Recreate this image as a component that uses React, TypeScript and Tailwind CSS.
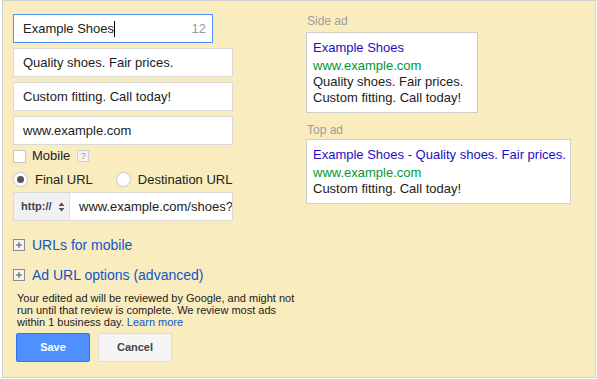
import React from 'react';

const font = { fontFamily: '"Liberation Sans", Arial, sans-serif' };

const Field: React.FC<{ value: string; wide?: boolean }> = ({ value }) => (
  <div className="h-[29px] w-[220px] mb-[5px] flex items-center bg-white border border-[#d9d9d9] pl-[9px] text-[13px] text-[#222]">
    {value}
  </div>
);

const PlusBox = () => (
  <svg width="12" height="12" viewBox="0 0 12 12" className="shrink-0">
    <rect x="0.5" y="0.5" width="11" height="11" fill="#f3f3f3" stroke="#8c8c8c" />
    <path d="M3 6h6M6 3v6" stroke="#555" strokeWidth="1" />
  </svg>
);

const Radio: React.FC<{ checked?: boolean }> = ({ checked }) => (
  <svg width="15" height="15" viewBox="0 0 15 15" className="shrink-0">
    <circle cx="7.5" cy="7.5" r="7" fill="#fff" stroke="#c6c6c6" />
    {checked && <circle cx="7.5" cy="7.5" r="3.5" fill="#555" />}
  </svg>
);

export default function App() {
  return (
    <div className="bg-white w-[597px] h-[379px]" style={font}>
      <div className="ml-[2px] w-[594px] h-[378px] border border-[#cfcfcf] bg-[#f9ecbe] flex pl-[10px] pt-[13px]">
        {/* form column */}
        <div className="w-[293px] shrink-0 flex flex-col">
          <div className="h-[29px] w-[200px] mb-[5px] flex items-center bg-white border border-[#4d90fe] pl-[9px] pr-[6px] text-[13px] text-[#222]">
            <span>Example Shoes</span>
            <span className="inline-block w-px h-[16px] bg-black" />
            <span className="ml-auto text-[#999]">12</span>
          </div>
          <Field value="Quality shoes. Fair prices." />
          <Field value="Custom fitting. Call today!" />
          <Field value="www.example.com" />

          <div className="flex items-center h-[14px] mt-[-1px] text-[13px] text-[#222]">
            <span className="w-[13px] h-[13px] bg-white border border-[#c6c6c6]" />
            <span className="ml-[6px]">Mobile</span>
            <span className="ml-[7px] w-[12px] h-[12px] border border-[#d0d0d0] bg-[#f3f3f3] flex items-center justify-center text-[9px] text-[#999] leading-none">?</span>
          </div>

          <div className="flex items-center h-[15px] mt-[9px] text-[13px] text-[#222]">
            <Radio checked />
            <span className="ml-[7px]">Final URL</span>
            <span className="ml-[23px]"><Radio /></span>
            <span className="ml-[7px]">Destination URL</span>
          </div>

          <div className="flex h-[29px] w-[220px] mt-[5px] border border-[#d9d9d9] bg-white overflow-hidden">
            <div className="w-[56px] shrink-0 bg-[#f1f1f1] border-r border-[#e0e0e0] flex items-center pl-[7px] text-[11px] font-bold text-[#444]">
              <span>http://</span>
              <svg width="7" height="10" viewBox="0 0 7 10" className="ml-[6px]">
                <path d="M3.5 0.5L6.5 4H0.5z M3.5 9.5L6.5 6H0.5z" fill="#555" />
              </svg>
            </div>
            <div className="flex items-center pl-[9px] text-[13px] text-[#222] whitespace-nowrap">www.example.com/shoes?</div>
          </div>

          <div className="flex items-center h-[16px] mt-[16px] text-[14px] text-[#1155cc]">
            <PlusBox />
            <span className="ml-[7px]">URLs for mobile</span>
          </div>
          <div className="flex items-center h-[16px] mt-[14px] text-[14px] text-[#1155cc]">
            <PlusBox />
            <span className="ml-[7px]">Ad URL options (advanced)</span>
          </div>

          <p className="ml-[4px] w-[285px] mt-[9px] text-[11px] leading-[12px] text-[#222]">
            Your edited ad will be reviewed by Google, and might not run until that review is complete. We review most ads within 1 business day. <span className="text-[#1155cc]">Learn more</span>
          </p>

          <div className="flex gap-[8px] ml-[3px] mt-[5px]">
            <button className="w-[74px] h-[29px] bg-[#4d90fe] border border-[#3079ed] rounded-[2px] text-white text-[11px] font-bold">Save</button>
            <button className="w-[74px] h-[29px] bg-[#f5f5f5] border border-[#dcdcdc] rounded-[2px] text-[#444] text-[11px] font-bold">Cancel</button>
          </div>
        </div>

        {/* preview column */}
        <div className="flex flex-col">
          <div className="pl-[1px] text-[12px] leading-[14px] text-[#9e9e9e]">Side ad</div>
          <div className="mt-[4px] w-[172px] bg-white border border-[#cfcfcf] px-[6px] pt-[5px] pb-[6px] text-[13px] text-[#222]">
            <div className="leading-[20px] text-[#1e0fbe]">Example Shoes</div>
            <div className="leading-[16px] text-[#009933]">www.example.com</div>
            <div className="leading-[16px]">Quality shoes. Fair prices.</div>
            <div className="leading-[16px]">Custom fitting. Call today!</div>
          </div>

          <div className="pl-[1px] mt-[10px] text-[12px] leading-[14px] text-[#9e9e9e]">Top ad</div>
          <div className="mt-[2px] w-[265px] bg-white border border-[#cfcfcf] px-[6px] pt-[5px] pb-[6px] text-[13px] text-[#222]">
            <div className="leading-[20px] text-[#1e0fbe] whitespace-nowrap">Example Shoes - Quality shoes. Fair prices.</div>
            <div className="leading-[16px] text-[#009933]">www.example.com</div>
            <div className="leading-[16px]">Custom fitting. Call today!</div>
          </div>
        </div>
      </div>
    </div>
  );
}
